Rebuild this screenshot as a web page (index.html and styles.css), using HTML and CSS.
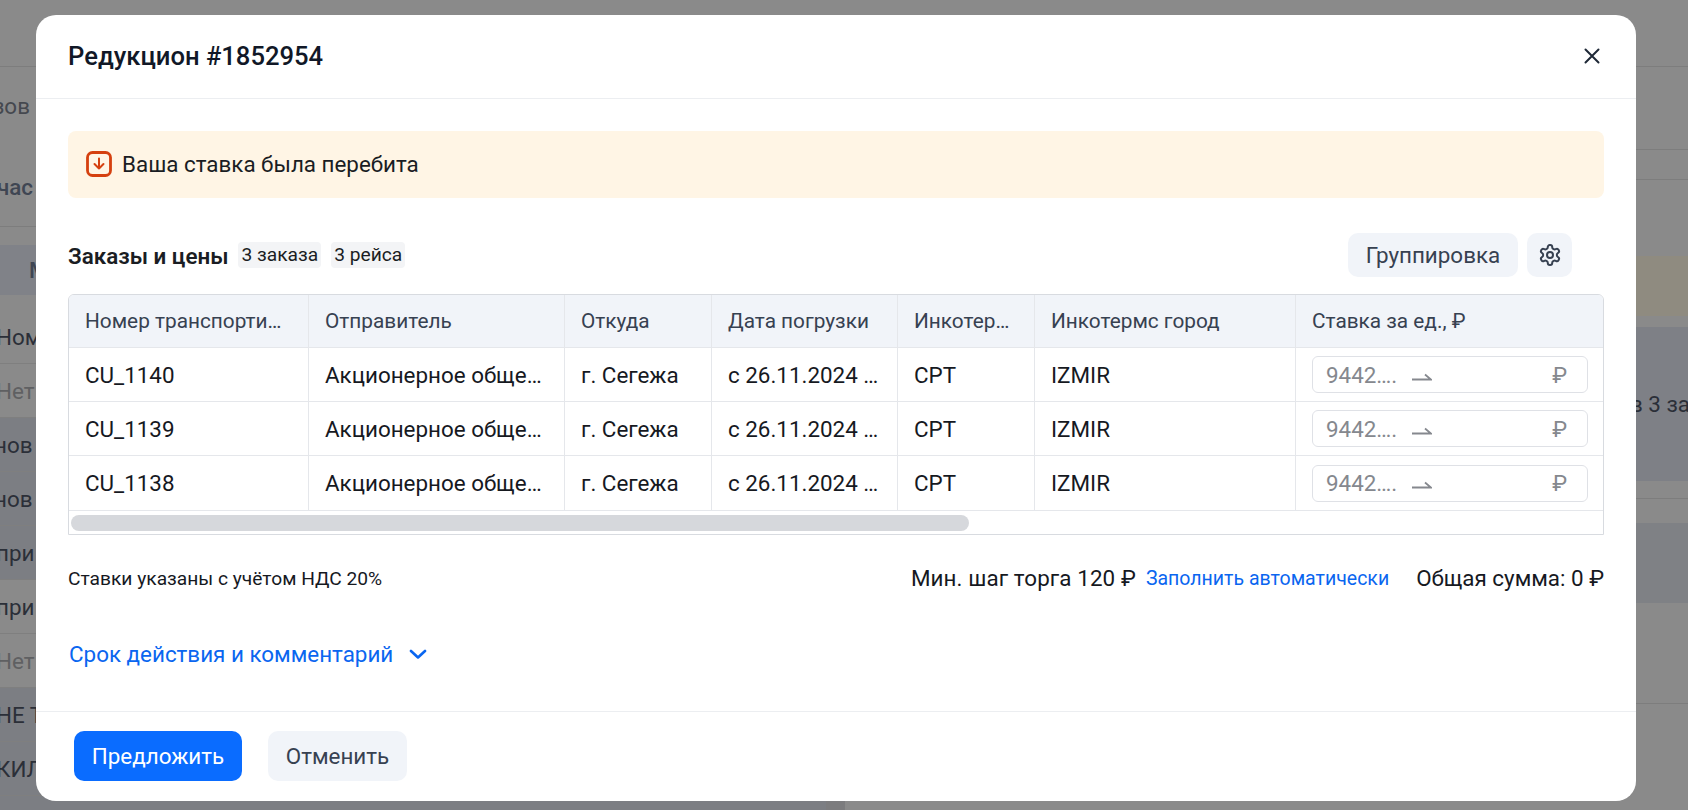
FILE: index.html
```html
<!DOCTYPE html>
<html lang="ru">
<head>
    <meta charset="UTF-8">
    <meta name="viewport" content="width=device-width, initial-scale=1.0">
    <title>Редукцион #1852954</title>
    <link rel="stylesheet" href="styles.css">
</head>
<body>
    <!-- dimmed page behind the modal -->
    <div class="backdrop">
        <div class="bg-left">
            <div class="bg-top"></div>
            <div class="bg-filter">зов</div>
            <div class="bg-group">час</div>
            <div class="bg-band"><span>М</span></div>
            <div class="bg-row">Ном</div>
            <div class="bg-row muted">Нет</div>
            <div class="bg-row dark cut">нов</div>
            <div class="bg-row dark cut">нов</div>
            <div class="bg-row dark">при</div>
            <div class="bg-row">при</div>
            <div class="bg-row muted">Нет</div>
            <div class="bg-row dark">НЕ Т</div>
            <div class="bg-row dark">КИЛ</div>
            <div class="bg-row dark"></div>
        </div>
        <div class="bg-gutter"></div>
        <div class="bg-right">
            <div class="r-line r-1"></div>
            <div class="r-line r-2"></div>
            <div class="r-line r-3"></div>
            <div class="r-spacer"></div>
            <div class="r-beige"></div>
            <div class="r-card"><span>в 3 заказах</span></div>
            <div class="r-line r-4"></div>
            <div class="r-card r-card-small"></div>
            <div class="r-line r-5"></div>
        </div>
    </div>

    <div class="modal">
        <header class="modal-header">
            <h1>Редукцион #1852954</h1>
            <button class="close" aria-label="Закрыть">
                <svg width="24" height="24" viewBox="0 0 24 24" fill="none" stroke="#1f2937" stroke-width="2" stroke-linecap="round"><path d="M5.5 5.5l13 13M18.5 5.5l-13 13"/></svg>
            </button>
        </header>

        <div class="modal-body">
            <div class="alert">
                <svg width="26" height="26" viewBox="0 0 26 26" fill="none" stroke="#d5400f" stroke-linecap="round" stroke-linejoin="round"><rect x="1.5" y="1.5" width="23" height="23" rx="5" stroke-width="2.8"/><path d="M13 7.5v10M8.5 13l4.5 4.5 4.5-4.5" stroke-width="2"/></svg>
                <span>Ваша ставка была перебита</span>
            </div>

            <div class="orders-head">
                <h2>Заказы и цены</h2>
                <span class="tag">3 заказа</span>
                <span class="tag">3 рейса</span>
                <button class="btn-light group-btn">Группировка</button>
                <button class="btn-light gear-btn" aria-label="Настройки">
                    <svg width="24" height="24" viewBox="0 0 24 24" fill="none" stroke="#374151" stroke-width="2" stroke-linecap="round" stroke-linejoin="round"><path d="M12.22 2h-.44a2 2 0 0 0-2 2v.18a2 2 0 0 1-1 1.73l-.43.25a2 2 0 0 1-2 0l-.15-.08a2 2 0 0 0-2.73.73l-.22.38a2 2 0 0 0 .73 2.73l.15.1a2 2 0 0 1 1 1.72v.51a2 2 0 0 1-1 1.74l-.15.09a2 2 0 0 0-.73 2.73l.22.38a2 2 0 0 0 2.73.73l.15-.08a2 2 0 0 1 2 0l.43.25a2 2 0 0 1 1 1.73V20a2 2 0 0 0 2 2h.44a2 2 0 0 0 2-2v-.18a2 2 0 0 1 1-1.73l.43-.25a2 2 0 0 1 2 0l.15.08a2 2 0 0 0 2.73-.73l.22-.39a2 2 0 0 0-.73-2.73l-.15-.08a2 2 0 0 1-1-1.74v-.5a2 2 0 0 1 1-1.74l.15-.09a2 2 0 0 0 .73-2.73l-.22-.38a2 2 0 0 0-2.73-.73l-.15.08a2 2 0 0 1-2 0l-.43-.25a2 2 0 0 1-1-1.73V4a2 2 0 0 0-2-2z"/><circle cx="12" cy="12" r="3"/></svg>
                </button>
            </div>

            <div class="table-box">
                <table>
                    <thead>
                        <tr>
                            <th class="c-num">Номер транспорти…</th>
                            <th class="c-sender">Отправитель</th>
                            <th class="c-from">Откуда</th>
                            <th class="c-date">Дата погрузки</th>
                            <th class="c-inco">Инкотер…</th>
                            <th class="c-city">Инкотермс город</th>
                            <th class="c-rate">Ставка за ед., ₽</th>
                        </tr>
                    </thead>
                    <tbody>
                        <tr>
                            <td>CU_1140</td>
                            <td>Акционерное обще…</td>
                            <td>г. Сегежа</td>
                            <td>с 26.11.2024 …</td>
                            <td>CPT</td>
                            <td>IZMIR</td>
                            <td>
                                <div class="rate-input">
                                    <span class="rate-value">9442….</span>
                                    <svg class="harpoon" width="20" height="8" viewBox="0 0 20 8" fill="none" stroke="#85888e" stroke-width="1.8"><path d="M0 6.5h19L13 1.5"/></svg>
                                    <span class="rate-cur">₽</span>
                                </div>
                            </td>
                        </tr>
                        <tr>
                            <td>CU_1139</td>
                            <td>Акционерное обще…</td>
                            <td>г. Сегежа</td>
                            <td>с 26.11.2024 …</td>
                            <td>CPT</td>
                            <td>IZMIR</td>
                            <td>
                                <div class="rate-input">
                                    <span class="rate-value">9442….</span>
                                    <svg class="harpoon" width="20" height="8" viewBox="0 0 20 8" fill="none" stroke="#85888e" stroke-width="1.8"><path d="M0 6.5h19L13 1.5"/></svg>
                                    <span class="rate-cur">₽</span>
                                </div>
                            </td>
                        </tr>
                        <tr>
                            <td>CU_1138</td>
                            <td>Акционерное обще…</td>
                            <td>г. Сегежа</td>
                            <td>с 26.11.2024 …</td>
                            <td>CPT</td>
                            <td>IZMIR</td>
                            <td>
                                <div class="rate-input">
                                    <span class="rate-value">9442….</span>
                                    <svg class="harpoon" width="20" height="8" viewBox="0 0 20 8" fill="none" stroke="#85888e" stroke-width="1.8"><path d="M0 6.5h19L13 1.5"/></svg>
                                    <span class="rate-cur">₽</span>
                                </div>
                            </td>
                        </tr>
                    </tbody>
                </table>
                <div class="scroll-track"><div class="scroll-thumb"></div></div>
            </div>

            <div class="summary">
                <span class="vat">Ставки указаны с учётом НДС 20%</span>
                <span class="step">Мин. шаг торга 120 ₽</span>
                <a class="autofill" href="#">Заполнить автоматически</a>
                <span class="total">Общая сумма: 0 ₽</span>
            </div>

            <a class="expand" href="#">
                Срок действия и комментарий
                <svg width="18" height="10" viewBox="0 0 18 10" fill="none" stroke="#0a66f0" stroke-width="2.6" stroke-linecap="round" stroke-linejoin="round"><path d="M2 2l7 6.5L16 2"/></svg>
            </a>
        </div>

        <footer class="modal-footer">
            <button class="btn-primary">Предложить</button>
            <button class="btn-light cancel-btn">Отменить</button>
        </footer>
    </div>
</body>
</html>
```

FILE: styles.css
```css
* {
    box-sizing: border-box;
}

body {
    margin: 0;
    height: 100vh;
    overflow: hidden;
    font-family: Roboto, "Noto Sans", sans-serif;
    font-size: 22.4px;
    color: #16191f;
    background-color: #8a8a8a;
}

button {
    font-family: inherit;
    border: none;
    cursor: pointer;
}

/* page behind the modal */

.backdrop {
    display: flex;
    height: 810px;
    overflow: hidden;
    color: #2b2f38;
}

.bg-left {
    width: 826px;
    flex-shrink: 0;
}

.bg-gutter {
    width: 19px;
    height: 9px;
    flex-shrink: 0;
    align-self: flex-end;
    background-color: #7c7c7e;
}

.bg-right {
    flex: 1;
}

.bg-top {
    height: 67px;
    border-bottom: 1px solid #7d7d7d;
}

.bg-filter {
    height: 80px;
    padding-top: 26px;
    margin-left: -7px;
    color: #45484f;
}

.bg-group {
    height: 80px;
    padding-top: 27px;
    margin-left: -3px;
    border-bottom: 1px solid #7d7d7d;
    font-weight: 500;
    color: #3f4653;
}

.bg-band {
    height: 50px;
    margin-top: 18px;
    margin-bottom: 15px;
    padding: 12px 0 0 29px;
    background-color: #808288;
    font-weight: 500;
    color: #3f4653;
}

.bg-row {
    height: 54px;
    padding-top: 14px;
    margin-left: -4px;
    border-bottom: 1px solid #7f7f7f;
    white-space: nowrap;
}

.bg-row.cut {
    margin-left: -6px;
}

.bg-row.muted {
    color: #5f6062;
}

.bg-row.dark {
    background-color: #7c7e83;
}

.r-line {
    border-bottom: 1px solid #7d7d7d;
}

.r-1 {
    height: 67px;
}

.r-2 {
    height: 83px;
}

.r-3 {
    height: 30px;
}

.r-spacer {
    height: 76px;
}

.r-beige {
    height: 60px;
    margin-bottom: 11px;
    background-color: #8f8b80;
}

.r-card {
    height: 154px;
    padding-top: 64px;
    background-color: #7e8086;
}

.r-card span {
    display: block;
    width: 58px;
    margin-left: auto;
    overflow: hidden;
    white-space: nowrap;
}

.r-4 {
    height: 18px;
    margin-bottom: 24px;
}

.r-card-small {
    height: 80px;
    padding-top: 0;
    background-color: #7f8185;
}

.r-5 {
    height: 101px;
}

/* modal */

.modal {
    position: absolute;
    top: 15px;
    left: 36px;
    width: 1600px;
    height: 786px;
    display: flex;
    flex-direction: column;
    background-color: #fff;
    border-radius: 20px;
}

.modal-header {
    height: 84px;
    flex-shrink: 0;
    display: flex;
    align-items: center;
    justify-content: space-between;
    padding: 0 32px 2px;
    border-bottom: 1px solid #eceef1;
}

.modal-header h1 {
    margin: 0;
    font-size: 25.6px;
    font-weight: 500;
    color: #111827;
}

.close {
    display: flex;
    padding: 0;
    background: none;
}

.modal-body {
    flex: 1;
    padding: 32px 32px 0;
}

.alert {
    height: 67px;
    display: flex;
    align-items: center;
    gap: 10px;
    padding: 0 0 2px 18px;
    background-color: #fff5e5;
    border-radius: 8px;
    color: #1a1d23;
}

.orders-head {
    height: 44px;
    margin-top: 35px;
    display: flex;
    align-items: center;
    gap: 10px;
    padding-right: 32px;
}

.orders-head h2 {
    margin: 0;
    padding-top: 2px;
    font-size: 22.4px;
    font-weight: 600;
    color: #1a1d23;
}

.tag {
    height: 26px;
    line-height: 26px;
    padding: 0 3px;
    background-color: #f3f4f6;
    border-radius: 4px;
    font-size: 19.2px;
    color: #1a1d23;
}

.btn-light {
    background-color: #f1f4f9;
    color: #374151;
    border-radius: 10px;
}

.group-btn {
    height: 44px;
    width: 170px;
    margin-left: auto;
    font-size: 22.4px;
}

.gear-btn {
    width: 45px;
    height: 44px;
    display: flex;
    align-items: center;
    justify-content: center;
    padding: 0;
    margin-left: -1px;
}

.table-box {
    margin-top: 17px;
    border: 1px solid #d8dbe0;
    border-radius: 6px 6px 0 0;
    overflow: hidden;
}

table {
    width: 100%;
    table-layout: fixed;
    border-collapse: separate;
    border-spacing: 0;
}

th,
td {
    height: 54px;
    padding: 0 16px;
    border-right: 1px solid #e5e7eb;
    border-bottom: 1px solid #e5e7eb;
    white-space: nowrap;
    text-align: left;
}

th:last-child,
td:last-child {
    border-right: none;
}

tbody tr:last-child td {
    height: 55px;
}

thead th {
    height: 53px;
    background-color: #f1f4f9;
    font-weight: 400;
    font-size: 20.8px;
    color: #374151;
}

.c-num { width: 240px; }
.c-sender { width: 256px; }
.c-from { width: 147px; }
.c-date { width: 186px; }
.c-inco { width: 137px; }
.c-city { width: 261px; }

.rate-input {
    width: 276px;
    height: 37px;
    display: flex;
    align-items: center;
    padding: 0 20px 0 13px;
    border: 1px solid #dfe1e6;
    border-radius: 6px;
    color: #85888e;
}

.rate-value {
    width: 64px;
}

.harpoon {
    margin: 4px 0 0 22px;
}

.rate-cur {
    margin-left: auto;
}

.scroll-track {
    height: 23px;
    padding: 4px 0 0 2px;
}

.scroll-thumb {
    width: 898px;
    height: 16px;
    background-color: #d6d8dc;
    border-radius: 8px;
}

.summary {
    height: 30px;
    margin-top: 28px;
    display: flex;
    align-items: center;
}

.vat {
    font-size: 19.2px;
    color: #16191f;
    margin-right: auto;
}

.step {
    letter-spacing: 0.1px;
}

.autofill {
    margin-left: 10px;
    font-size: 19.5px;
    color: #0a66f0;
    text-decoration: none;
}

.total {
    margin-left: 27px;
}

.expand {
    height: 30px;
    margin-top: 46px;
    display: flex;
    align-items: center;
    gap: 16px;
    padding-left: 1px;
    color: #0a66f0;
    text-decoration: none;
}

.modal-footer {
    height: 90px;
    flex-shrink: 0;
    display: flex;
    align-items: flex-start;
    gap: 26px;
    padding: 19px 38px 0;
    border-top: 1px solid #eceef1;
}

.btn-primary {
    width: 168px;
    height: 50px;
    background-color: #0a6cff;
    color: #fff;
    border-radius: 10px;
    font-size: 22.4px;
}

.cancel-btn {
    width: 139px;
    height: 50px;
    font-size: 22.4px;
}
```
